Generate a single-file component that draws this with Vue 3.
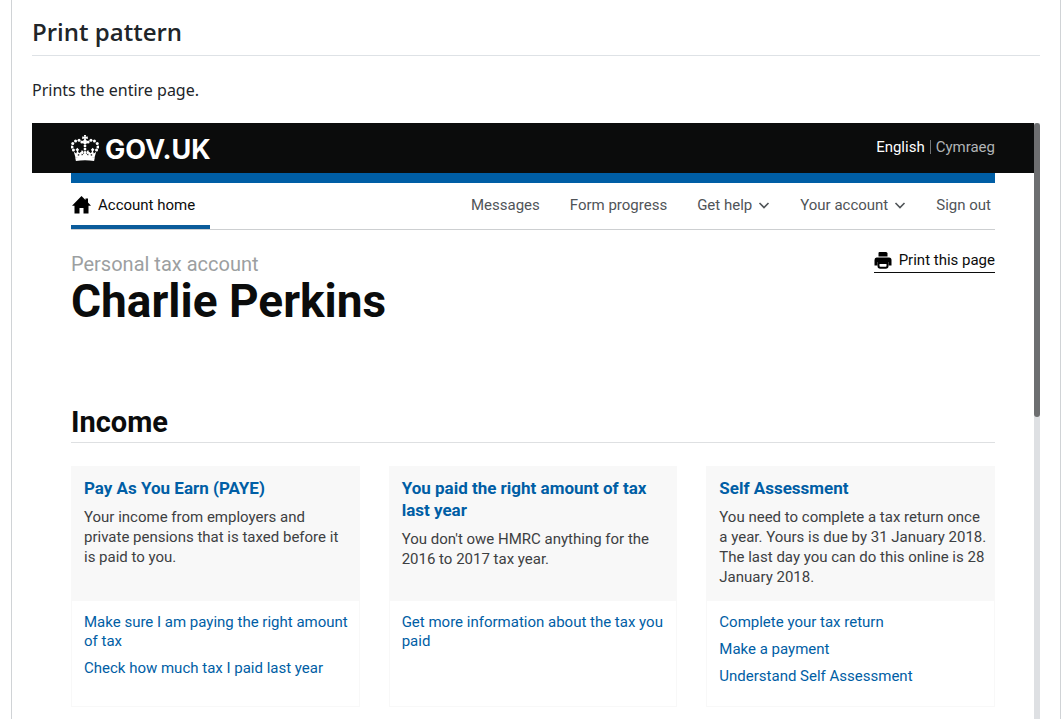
<script setup>
const navItems = [
  { label: 'Messages' },
  { label: 'Form progress' },
  { label: 'Get help', menu: true },
  { label: 'Your account', menu: true },
  { label: 'Sign out' },
]

const cards = [
  {
    title: 'Pay As You Earn (PAYE)',
    text: 'Your income from employers and private pensions that is taxed before it\nis paid to you.',
    links: ['Make sure I am paying the right amount of tax', 'Check how much tax I paid last year'],
  },
  {
    title: 'You paid the right amount of tax last year',
    text: "You don't owe HMRC anything for the 2016 to 2017 tax year.",
    links: ['Get more information about the tax you paid'],
  },
  {
    title: 'Self Assessment',
    text: 'You need to complete a tax return once a year. Yours is due by 31 January 2018. The last day you can do this online is 28 January 2018.',
    links: ['Complete your tax return', 'Make a payment', 'Understand Self Assessment'],
  },
]

const beads = [
  [7, 43], [3, 34], [5, 24], [13, 17], [23, 15], [31, 20],
]
</script>

<template>
  <article class="doc">
    <h2 class="doc-title">Print pattern</h2>
    <p class="doc-text">Prints the entire page.</p>

    <div class="preview">
      <div class="page">
        <header class="masthead">
          <a class="brand" href="#">
            <svg class="crown" viewBox="0 0 80 74" aria-hidden="true">
              <g fill="#fff">
                <path d="M37 0h6l-1 5 6-1v7l-6-1 1 5h-6l1-5-6 1V4l6 1z" />
                <ellipse cx="40" cy="20" rx="6" ry="7" />
                <circle cx="40" cy="31" r="4" />
                <circle cx="40" cy="40" r="4" />
                <g v-for="side in [1, -1]" :key="side" :transform="side === 1 ? '' : 'translate(80 0) scale(-1 1)'">
                  <circle v-for="(b, i) in beads" :key="i" :cx="b[0]" :cy="b[1]" r="4.300" />
                  <path d="M8 48l7 5 2-7-4-4 5-6 5 6-3 4 3 6 7-5-1-3 6 1v9l5-3v12q-16-1-27 2z" />
                </g>
                <path d="M40 44l5 5-5 7-5-7z" />
                <path d="M12 64q28-6 56 0l-2 10q-26-4-52 0z" />
              </g>
              <g fill="#0b0c0c">
                <path d="M19 56l4-2 1 4-4 1zM61 56l-4-2-1 4 4 1z" />
                <path d="M31 53l4 4-5 1zM49 53l-4 4 5 1z" />
              </g>
            </svg>
            <span>GOV.UK</span>
          </a>
          <div class="languages">
            <span class="current">English</span>
            <span class="divider"></span>
            <a href="#">Cymraeg</a>
          </div>
        </header>

        <main class="content">
          <nav class="nav" aria-label="Account">
            <a class="home" href="#">
              <svg width="19" height="18" viewBox="0 0 19 18" aria-hidden="true">
                <path d="M9.500 0l4 4V2.500H16v4l3 3.300h-2.500v7.700H11.500V12h-4v5.500H2.500V9.800H0z" />
              </svg>
              Account home
            </a>
            <ul class="nav-list">
              <li v-for="item in navItems" :key="item.label">
                <button v-if="item.menu" type="button">
                  {{ item.label }}
                  <svg width="12" height="8" viewBox="0 0 12 8" aria-hidden="true">
                    <path d="M1.500 2L6 6.500 10.500 2" fill="none" stroke="#505458" stroke-width="1.600" />
                  </svg>
                </button>
                <a v-else href="#">{{ item.label }}</a>
              </li>
            </ul>
          </nav>

          <div class="heading">
            <div>
              <p class="caption">Personal tax account</p>
              <h1>Charlie Perkins</h1>
            </div>
            <button class="print" type="button">
              <svg width="18" height="18" viewBox="0 0 18 18" aria-hidden="true">
                <path d="M5.500 1h6.500q1.500 0 1.500 1.500V5.500h-9V2q0-1 1-1z" />
                <path d="M2.500 6.500h12.500q2.500 0 2.500 2.500v5.500h-3V11h-11v3.500H.500V9q0-2.500 2-2.500z" />
                <path d="M4.500 12h9v3q0 1.800-1.800 1.800H6.300q-1.800 0-1.800-1.800z" fill="none" stroke="#000" stroke-width="2" />
              </svg>
              Print this page
            </button>
          </div>

          <section>
            <h2 class="section-title">Income</h2>
            <div class="cards">
              <article v-for="card in cards" :key="card.title" class="card">
                <div class="summary">
                  <h3><a href="#">{{ card.title }}</a></h3>
                  <p>{{ card.text }}</p>
                </div>
                <ul class="actions">
                  <li v-for="link in card.links" :key="link"><a href="#">{{ link }}</a></li>
                </ul>
              </article>
            </div>
          </section>
        </main>
      </div>
      <div class="scrollbar"><div class="thumb"></div></div>
    </div>
  </article>
</template>

<style>
body {
  margin: 0;
  background: #fff;
}
</style>

<style scoped>
* {
  box-sizing: border-box;
}
h1, h2, h3, p, ul {
  margin: 0;
  padding: 0;
}
ul {
  list-style: none;
}
a {
  color: inherit;
  text-decoration: none;
}
button {
  padding: 0;
  border: 0;
  background: none;
  color: inherit;
  font: inherit;
  cursor: pointer;
}
.doc {
  min-height: 100vh;
  margin: 0 3px 0 11px;
  padding: 17px 20px 0;
  border: solid #d0d3d6;
  border-width: 0 1px;
  color: #212529;
  font-family: "Noto Sans", "Open Sans", sans-serif;
}
.doc-title {
  padding-bottom: 8px;
  border-bottom: 1px solid #dee2e6;
  font-family: "Open Sans", sans-serif;
  font-size: 24px;
  font-weight: 600;
  line-height: 30px;
}
.doc-text {
  margin: 22px 0 21px;
  font-size: 16px;
  line-height: 24px;
}
.preview {
  display: flex;
}
.page {
  flex: 1;
  min-width: 0;
  padding-bottom: 12px;
  color: #0b0c0c;
  font-family: Roboto, sans-serif;
  font-size: 15px;
}
.scrollbar {
  width: 6px;
  background: #dee0e3;
}
.thumb {
  height: 294px;
  border-radius: 3px;
  background: #6d6e70;
}
.masthead {
  display: flex;
  align-items: center;
  justify-content: space-between;
  height: 50px;
  padding: 0 39px;
  background: #0b0c0c;
  color: #fff;
}
.brand {
  display: flex;
  align-items: center;
  gap: 6px;
  padding-top: 3px;
  font-family: Inter, sans-serif;
  font-size: 27px;
  font-weight: 700;
  line-height: 32px;
}
.crown {
  width: 28px;
  height: 26px;
  margin-bottom: 4px;
}
.languages {
  display: flex;
  align-items: center;
  gap: 5px;
  padding-bottom: 2px;
  color: #b1b4b6;
}
.current {
  color: #fff;
}
.divider {
  width: 1px;
  height: 14px;
  background: #6f7274;
}
.content {
  margin: 0 39px;
  border-top: 10px solid #005ea5;
}
.nav {
  display: flex;
  justify-content: space-between;
  height: 47px;
  border-bottom: 1px solid #cdcfd1;
}
.home {
  display: flex;
  align-items: center;
  gap: 7px;
  height: 46px;
  padding: 1px 15px 0 1px;
  border-bottom: 4px solid #0b5c9b;
}
.nav-list {
  display: flex;
  align-items: center;
  gap: 30px;
  padding: 0 4px 3px 0;
  color: #505458;
}
.nav-list button {
  display: flex;
  align-items: center;
  gap: 6px;
}
.heading {
  display: flex;
  align-items: flex-start;
  justify-content: space-between;
  padding: 20px 0 84px;
}
.caption {
  padding-top: 1px;
  color: #9c9fa1;
  font-size: 20px;
  line-height: 26px;
}
h1 {
  font-size: 46px;
  font-weight: 700;
  line-height: 49px;
}
.print {
  display: flex;
  align-items: center;
  gap: 7px;
  height: 23px;
  padding-bottom: 2px;
  border-bottom: 1px solid #0b0c0c;
}
.section-title {
  height: 33px;
  border-bottom: 1px solid #dee0e2;
  font-size: 29px;
  font-weight: 700;
  line-height: 24px;
}
.cards {
  display: grid;
  grid-template-columns: repeat(3, 1fr);
  gap: 29px;
  margin-top: 23px;
}
.card {
  border: 1px solid #f8f8f8;
}
.summary {
  min-height: 134px;
  padding: 10px 7px 13px 12px;
  background: #f8f8f8;
}
.summary h3 {
  margin-bottom: 8px;
  color: #005ea5;
  font-size: 17px;
  font-weight: 700;
  line-height: 22px;
}
.summary p {
  color: #3d4042;
  line-height: 20px;
  white-space: pre-line;
}
.actions {
  display: flex;
  flex-direction: column;
  gap: 8px;
  padding: 12px 7px 20px 12px;
  color: #005ea5;
  line-height: 19px;
}
</style>
